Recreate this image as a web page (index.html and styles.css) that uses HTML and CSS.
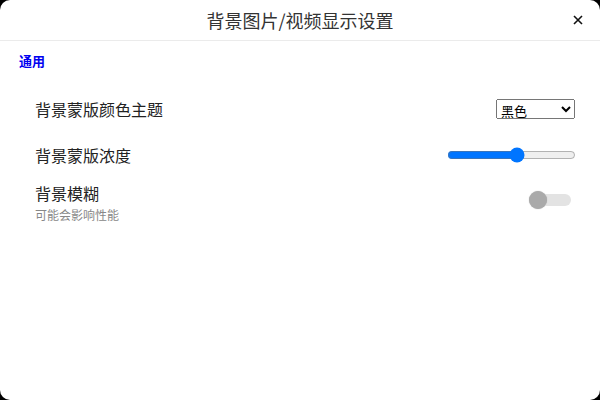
FILE: index.html
```html
<!DOCTYPE html>
<html lang="zh">
<head>
<meta charset="utf-8">
<link rel="stylesheet" href="styles.css">
</head>
<body>
<div class="dialog">
  <header class="head">
    <h1 class="title">背景图片/视频显示设置</h1>
    <button class="close" aria-label="关闭">
      <svg width="10" height="10" viewBox="0 0 10 10"><path d="M1 1L9 9M9 1L1 9" stroke="#111" stroke-width="1.6" fill="none"/></svg>
    </button>
  </header>
  <section class="body">
    <div class="section-title">通用</div>
    <div class="row r1">
      <span class="label">背景蒙版颜色主题</span>
      <select class="sel"><option>黑色</option><option>白色</option></select>
    </div>
    <div class="row r2">
      <span class="label">背景蒙版浓度</span>
      <input class="range" type="range" min="0" max="100" value="55">
    </div>
    <div class="row r3">
      <div class="labels">
        <span class="label tight">背景模糊</span>
        <span class="sub">可能会影响性能</span>
      </div>
      <span class="toggle"><span class="knob"></span></span>
    </div>
  </section>
</div>
</body>
</html>
```
FILE: styles.css
```css
html, body {
  margin: 0;
  padding: 0;
  background: #000;
  width: 600px;
  height: 400px;
  overflow: hidden;
}
.dialog {
  width: 600px;
  height: 400px;
  background: #fff;
  border-radius: 10px;
  font-family: "Noto Sans CJK SC", "Noto Sans", sans-serif;
  color: #222;
  box-sizing: border-box;
}
.head {
  height: 40px;
  border-bottom: 1px solid #ebebeb;
  display: flex;
  align-items: center;
  justify-content: center;
  position: relative;
}
.title {
  margin: 0;
  font-size: 18px;
  font-weight: 400;
  color: #333;
  line-height: 24px;
}
.close {
  position: absolute;
  right: 17px;
  top: 15px;
  width: 10px;
  height: 10px;
  padding: 0;
  border: 0;
  background: none;
  display: flex;
}
.body {
  padding: 10px 25px 0 19px;
}
.section-title {
  color: #0000f0;
  font-size: 13px;
  font-weight: 700;
  line-height: 20px;
}
.row {
  display: flex;
  align-items: center;
  justify-content: space-between;
  padding-left: 16px;
}
.r1 { margin-top: 28px; height: 20px; }
.r2 { margin-top: 26px; height: 20px; }
.r3 { margin-top: 17px; align-items: flex-start; }
.label {
  font-size: 16px;
  line-height: 20px;
  color: #222;
}
.label.tight {
  line-height: 22px;
}
.labels {
  display: flex;
  flex-direction: column;
}
.sub {
  margin-top: 2px;
  font-size: 12px;
  line-height: 17px;
  color: #888;
}
.sel {
  width: 79px;
  height: 20px;
  font-family: "Noto Sans CJK SC", sans-serif;
  font-size: 13px;
  margin: -1px 0 0 0;
}
.range {
  width: 129px;
  margin: 0 -1px 0 0;
}
.toggle {
  margin-top: 9px;
  margin-right: 4px;
  width: 42px;
  height: 18px;
  display: flex;
  align-items: center;
  position: relative;
}
.toggle::before {
  content: "";
  position: absolute;
  left: 4px;
  right: 0;
  height: 12px;
  border-radius: 6px;
  background: #e3e3e3;
}
.knob {
  position: relative;
  width: 18px;
  height: 18px;
  border-radius: 50%;
  background: #aaa;
  box-shadow: 0 0 1px #aaa;
}
```
